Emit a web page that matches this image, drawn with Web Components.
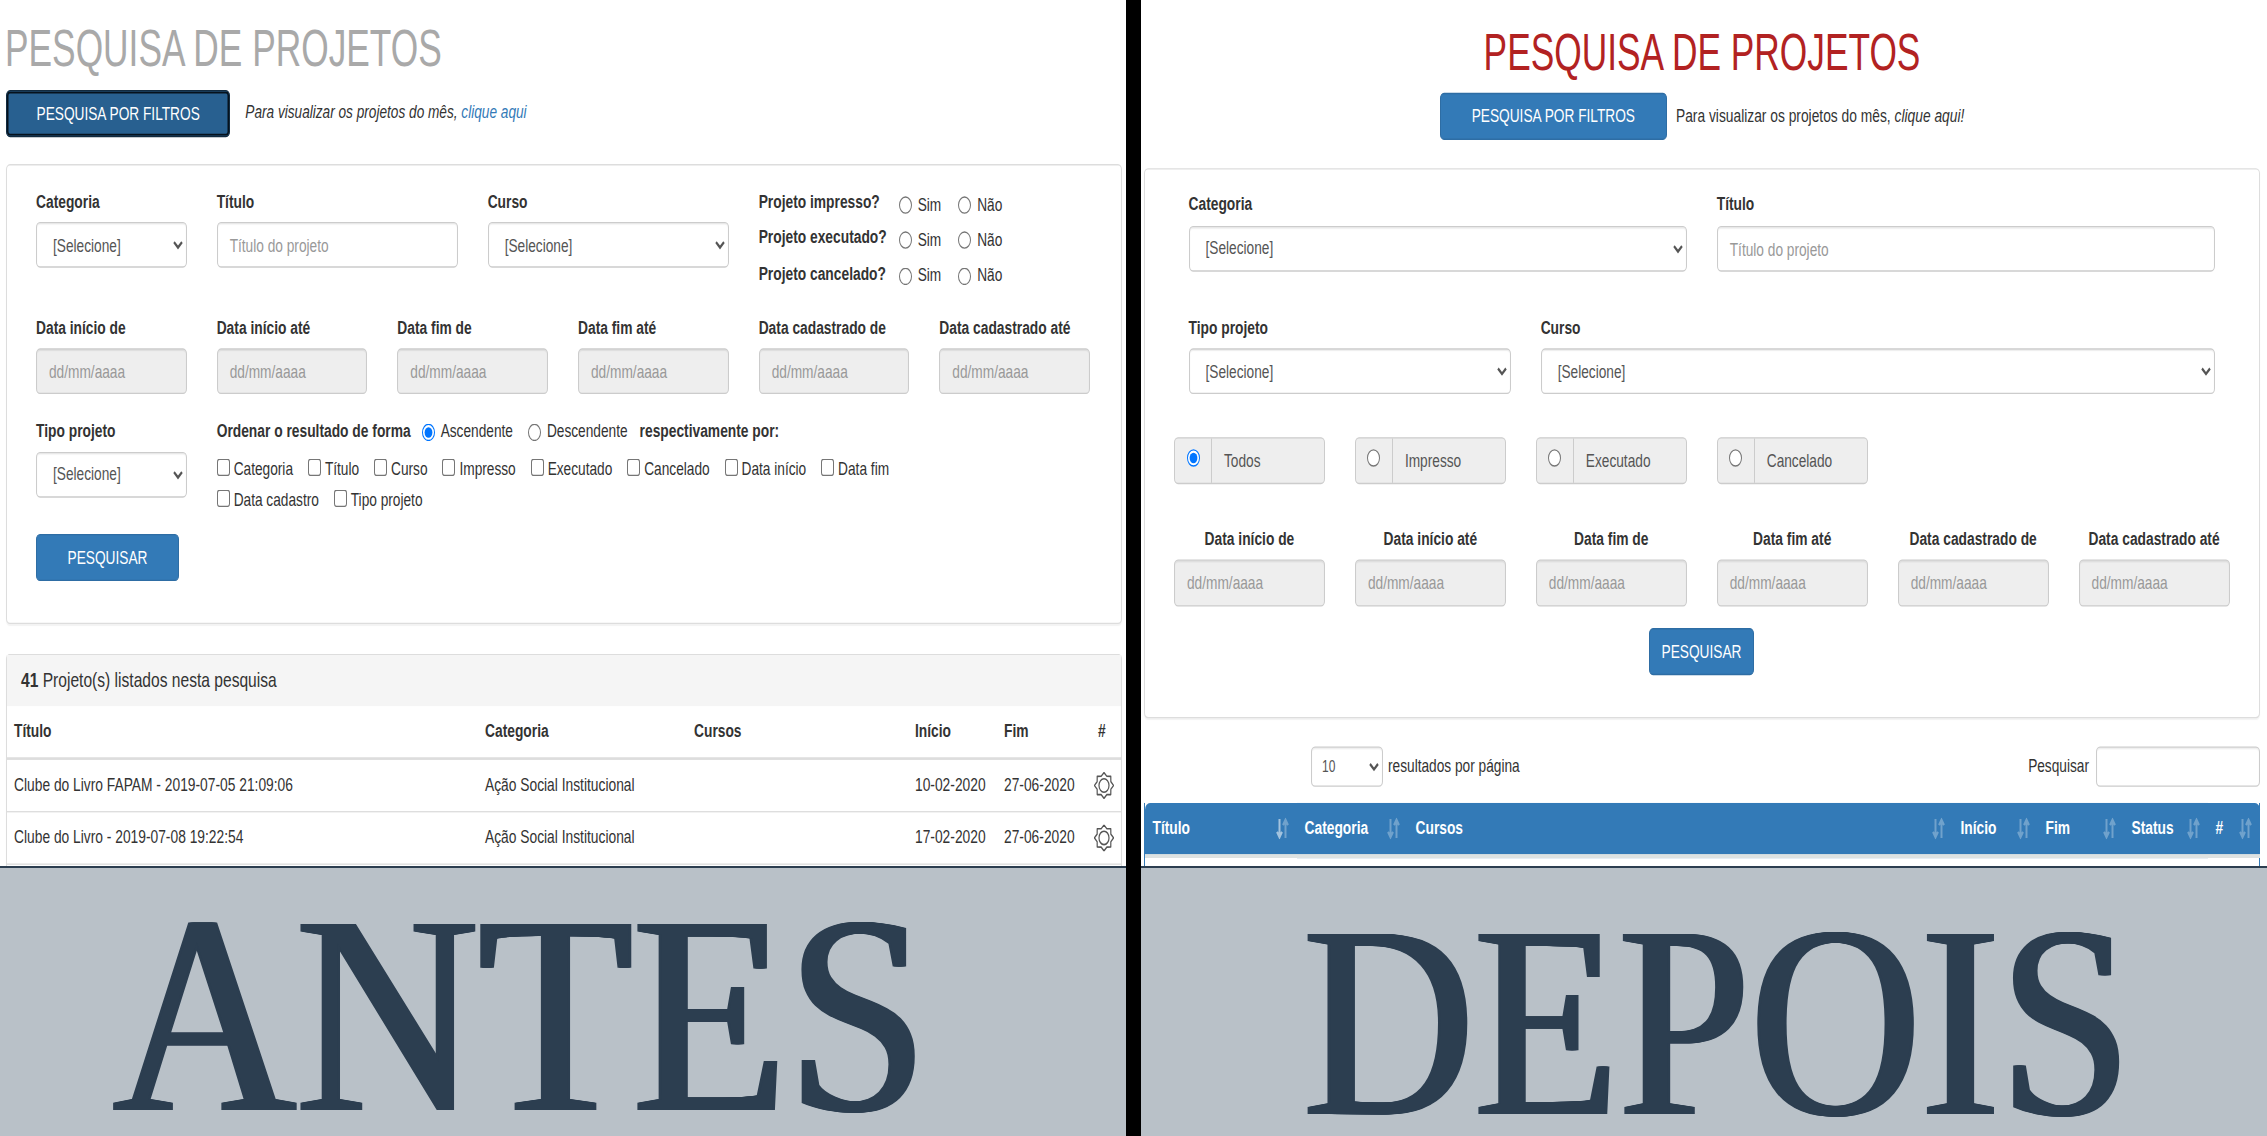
<!DOCTYPE html>
<html lang="pt-BR">
<head>
<meta charset="utf-8">
<title>Pesquisa de projetos - antes e depois</title>
<style>
    html, body { margin: 0; height: 100%; overflow: hidden; background: #000; }
    body { display: flex; gap: 15px; font-family: "Liberation Sans", Arial, sans-serif; }
</style>
</head>
<body>
<compare-pane label="ANTES" style="--label-size:284px;--label-sx:.89;--label-top:34px;--label-shift:-42px">
    <before-view></before-view>
</compare-pane>
<compare-pane label="DEPOIS" style="--label-size:275px;--label-sx:.86;--label-top:41px;--label-shift:13px">
    <after-view></after-view>
</compare-pane>

<script>
(()=>{
    const FONT = '"Liberation Sans", Arial, sans-serif';

    // styles every view needs again, since nothing crosses a shadow root
    const base = `
    * { box-sizing: border-box; }
    h1 { margin: 0; font-size: 35.3px; line-height: 38.5px; font-weight: 400; transform: scaleY(1.08); transform-origin: 0 32px; }
    b, .lb { font-weight: 700; }
    a { color: #337ab7; text-decoration: none; }
    .c2 { grid-column: span 2; padding: 0 15px; }
    .c3 { grid-column: span 3; padding: 0 15px; }
    .c4 { grid-column: span 4; padding: 0 15px; }
    .c6 { grid-column: span 6; padding: 0 15px; }
    .c8 { grid-column: span 8; padding: 0 15px; }
    .c10 { grid-column: span 10; padding: 0 15px; }
    .card { border: 1px solid #ddd; border-radius: 4px; background: #fff; box-shadow: 0 1px 1px rgba(0,0,0,.05); }
    input[type=radio], input[type=checkbox] { margin: 0; width: 13px; height: 13px; flex: none; }
    `;

    class ComparePane extends HTMLElement {
        connectedCallback() {
            const shadow = this.attachShadow({ mode: 'open' });
            shadow.innerHTML = `
<style>
    :host { display: flex; flex-direction: column; width: 1126px; flex: none; height: 100%; }
    .shot { height: 866px; background: #fff; overflow: hidden; }
    .stretch { height: 644px; transform: scaleY(1.345); transform-origin: 0 0; }
    .label {
        flex: 1; min-height: 0; overflow: hidden;
        display: flex; justify-content: center; align-items: flex-start;
        padding-top: var(--label-top);
        background: #b9c1c8;
        border-top: 2px solid #2c3e50;
    }
    span {
        font: 400 var(--label-size)/225px "Liberation Serif", "Times New Roman", serif;
        color: #2c3e50;
        /* stems heavier, hairlines stay thin */
        text-shadow: 3px 0 0 #2c3e50, -3px 0 0 #2c3e50, 1.5px 0 0 #2c3e50, -1.5px 0 0 #2c3e50;
        transform: translateX(var(--label-shift)) scaleX(var(--label-sx));
    }
</style>
<div class="shot"><div class="stretch"><slot></slot></div></div>
<div class="label"><span>${this.getAttribute('label')}</span></div>`;
        }
    }

    class UiSelect extends HTMLElement {
        connectedCallback() {
            const shadow = this.attachShadow({ mode: 'open' });
            const text = this.getAttribute('text') || '[Selecione]';
            shadow.innerHTML = `
<style>
    :host { display: block; }
    select {
        display: block; width: 100%; height: var(--h, 34px);
        padding: var(--pad, 6px 12px);
        font: var(--fs, 13.7px)/1.43 ${FONT};
        color: #555; background-color: #fff;
        border: 1px solid #ccc; border-radius: 4px;
        box-shadow: inset 0 1px 1px rgba(0,0,0,.075);
    }
</style>
<select><option>${text}</option></select>`;
        }
    }

    // looks like a bootstrap form-control; the placeholder stays plain text
    class UiInput extends HTMLElement {
        connectedCallback() {
            const shadow = this.attachShadow({ mode: 'open' });
            shadow.innerHTML = `
<style>
    :host {
        display: block; box-sizing: border-box; height: var(--h, 34px); padding: 7px 12px 5px;
        font: 13.7px/20px ${FONT}; color: #999; background: #fff;
        border: 1px solid #ccc; border-radius: 4px;
        box-shadow: inset 0 1px 1px rgba(0,0,0,.075);
    }
    :host([disabled]) { background: #eee; }
</style>
<slot></slot>`;
        }
    }

    class UiButton extends HTMLElement {
        connectedCallback() {
            const shadow = this.attachShadow({ mode: 'open' });
            shadow.innerHTML = `
<style>
    :host {
        display: inline-block; box-sizing: border-box; height: 35px; padding: 7px 30px;
        font: 13.7px/20px ${FONT}; color: #fff; white-space: nowrap;
        background: #337ab7; border: 1px solid #2e6da4; border-radius: 4px;
    }
    :host([focused]) {
        background: #286090; border-color: #122b40;
        box-shadow: inset 0 0 0 1.5px #06121d;
    }
</style>
<slot></slot>`;
        }
    }

    class FormField extends HTMLElement {
        connectedCallback() {
            const shadow = this.attachShadow({ mode: 'open' });
            shadow.innerHTML = `
<style>
    :host { display: block; }
    label { display: block; font: 700 13.8px/20px ${FONT}; color: #333; margin-bottom: var(--gap, 5.5px); white-space: nowrap; }
    :host([center]) label { text-align: center; }
</style>
<label>${this.getAttribute('label')}</label>
<slot></slot>`;
        }
    }

    class SortIcon extends HTMLElement {
        connectedCallback() {
            const shadow = this.attachShadow({ mode: 'open' });
            const down = this.hasAttribute('active') ? .55 : .3;
            shadow.innerHTML = `
<style>:host { display: block; width: 13px; height: 16px; flex: none; } svg { display: block; }</style>
<svg width="13" height="16" viewBox="0 0 13 16" fill="none" stroke="#fff" stroke-width="2">
    <path d="M3.5 1V14M1 10.5L3.5 14.5 6 10.5" opacity="${down}"/>
    <path d="M9.5 15V2M7 5.5L9.5 1.5 12 5.5" opacity=".3"/>
</svg>`;
        }
    }

    class GearIcon extends HTMLElement {
        connectedCallback() {
            const shadow = this.attachShadow({ mode: 'open' });
            const pts = [];
            for (let i = 0; i < 16; i++) {
                const r = i % 2 ? 7.4 : 9.6;
                const a = i * Math.PI / 8 - Math.PI / 2;
                pts.push((10 + r * Math.cos(a)).toFixed(2) + ',' + (10 + r * Math.sin(a)).toFixed(2));
            }
            shadow.innerHTML = `
<style>:host { display: block; width: 20px; height: 20px; } svg { display: block; }</style>
<svg width="20" height="20" viewBox="0 0 20 20" fill="none" stroke="#555" stroke-width="1.2">
    <polygon points="${pts.join(' ')}" stroke-linejoin="round"/>
    <circle cx="10" cy="10" r="5"/>
</svg>`;
        }
    }

    class BeforeView extends HTMLElement {
        connectedCallback() {
            const shadow = this.attachShadow({ mode: 'open' });
            const dates = ['Data início de', 'Data início até', 'Data fim de', 'Data fim até', 'Data cadastrado de', 'Data cadastrado até'];
            const checks = ['Categoria', 'Título', 'Curso', 'Impresso', 'Executado', 'Cancelado', 'Data início', 'Data fim', 'Data cadastro', 'Tipo projeto'];
            const flags = ['Projeto impresso?', 'Projeto executado?', 'Projeto cancelado?'];
            const rows = [
                ['Clube do Livro FAPAM - 2019-07-05 21:09:06', '10-02-2020'],
                ['Clube do Livro - 2019-07-08 19:22:54', '17-02-2020'],
            ];
            shadow.innerHTML = `
<style>
    ${base}
    :host { display: block; font: 13.7px/20px ${FONT}; color: #333; }
    h1 { color: #a9a9a9; padding: 17px 0 0 5px; }
    .row { display: grid; grid-template-columns: repeat(12, 1fr); }
    .bar { display: flex; align-items: center; gap: 15px; margin: 11px 0 0 6px; }
    .bar ui-button { padding-left: 29.5px; padding-right: 29.5px; }
    .note { font-size: 13.65px; font-style: italic; }
    .card.filters { width: 1116px; margin: 20px 0 0 6px; padding: 18px 16px 31px 14px; }
    .r1 { --gap: 4.5px; }
    .flags { padding-top: .5px; }
    .flag { display: flex; height: 26.4px; white-space: nowrap; font-size: 13.8px; }
    .flag b { width: 140px; }
    .opts { display: flex; align-items: center; height: 20px; margin-top: 1.5px; font-size: 13.7px; }
    .opts input { margin-right: 6px; }
    .opts span { margin-right: 17px; }
    .r2 { margin-top: 13.5px; }
    .r3 { margin-top: 18px; --gap: 4.7px; }
    .order { display: flex; align-items: center; height: 20px; white-space: nowrap; }
    .order b { font-size: 13.8px; }
    .order input { margin: 0 6px 0 11px; }
    .order b:last-child { margin-left: 12px; }
    .order span + input { margin-left: 15px; }
    .checks { display: flex; flex-wrap: wrap; width: 700px; margin-top: 6.6px; }
    .checks label { display: flex; align-items: center; height: 23px; margin-right: 14.9px; white-space: nowrap; }
    .checks input { margin: 0 4px 3px 0; }
    .go { margin-top: 12.9px; padding-left: 15px; }
    .go ui-button { padding-left: 30px; padding-right: 30px; width: 143px; text-align: center; }
    .results { width: 1116px; margin: 22px 0 0 6px; height: 170px; border-bottom: 0; border-radius: 4px 4px 0 0; }
    .head { height: 38.5px; padding: 9px 14px; background: #f5f5f5; font-size: 15.6px; }
    table { width: 100%; table-layout: fixed; border-collapse: collapse; }
    th { height: 39px; padding: 8px 7px; text-align: left; border-bottom: 2px solid #ddd; font-size: 13.8px; }
    td { padding: 8.9px 7px; border-bottom: 1px solid #ddd; white-space: nowrap; font-size: 13.8px; }
    td.g { padding: 0 0 0 3px; }
</style>
<h1>PESQUISA DE PROJETOS</h1>
<div class="bar">
    <ui-button focused>PESQUISA POR FILTROS</ui-button>
    <span class="note">Para visualizar os projetos do mês, <a>clique aqui</a></span>
</div>
<div class="card filters">
    <div class="row r1">
        <form-field class="c2" label="Categoria"><ui-select></ui-select></form-field>
        <form-field class="c3" label="Título"><ui-input>Título do projeto</ui-input></form-field>
        <form-field class="c3" label="Curso"><ui-select></ui-select></form-field>
        <div class="c4 flags">
            ${flags.map(f => `<div class="flag"><b>${f}</b><div class="opts"><input type="radio"><span>Sim</span><input type="radio"><span>Não</span></div></div>`).join('')}
        </div>
    </div>
    <div class="row r2">
        ${dates.map(d => `<form-field class="c2" label="${d}"><ui-input disabled>dd/mm/aaaa</ui-input></form-field>`).join('')}
    </div>
    <div class="row r3">
        <form-field class="c2" label="Tipo projeto"><ui-select></ui-select></form-field>
        <div class="c10">
            <div class="order">
                <b>Ordenar o resultado de forma</b>
                <input type="radio" checked><span>Ascendente</span>
                <input type="radio"><span>Descendente</span>
                <b>respectivamente por:</b>
            </div>
            <div class="checks">
                ${checks.map(c => `<label><input type="checkbox">${c}</label>`).join('')}
            </div>
        </div>
    </div>
    <div class="go"><ui-button>PESQUISAR</ui-button></div>
</div>
<div class="card results">
    <div class="head"><b>41</b> Projeto(s) listados nesta pesquisa</div>
    <table>
        <colgroup><col style="width:471px"><col style="width:209px"><col style="width:221px"><col style="width:89px"><col style="width:94px"><col></colgroup>
        <tr><th>Título</th><th>Categoria</th><th>Cursos</th><th>Início</th><th>Fim</th><th>#</th></tr>
        ${rows.map(r => `<tr><td>${r[0]}</td><td>Ação Social Institucional</td><td></td><td>${r[1]}</td><td>27-06-2020</td><td class="g"><gear-icon></gear-icon></td></tr>`).join('')}
    </table>
</div>`;
        }
    }

    class AfterView extends HTMLElement {
        connectedCallback() {
            const shadow = this.attachShadow({ mode: 'open' });
            const dates = ['Data início de', 'Data início até', 'Data fim de', 'Data fim até', 'Data cadastrado de', 'Data cadastrado até'];
            const status = ['Todos', 'Impresso', 'Executado', 'Cancelado'];
            const cols = [['Título', 152, 1], ['Categoria', 111], ['Cursos', 545], ['Início', 85], ['Fim', 86], ['Status', 84], ['#', 52]];
            shadow.innerHTML = `
<style>
    ${base}
    :host { display: block; width: 1122px; font: 13.7px/20px ${FONT}; color: #333; --gap: 5.5px; }
    h1 { color: #b22222; text-align: center; padding-top: 20px; transform-origin: 0 35px; }
    .bar { display: flex; justify-content: center; align-items: center; gap: 9px; margin-top: 10.5px; }
    .bar ui-button { padding-left: 31px; padding-right: 31px; }
    .note { font-size: 13.8px; }
    .card.filters { width: 1116px; margin: 21px 0 0 2.5px; padding: 16px 0 31px; }
    .a, .b { display: grid; grid-template-columns: repeat(12, 1fr); }
    .a { margin: 0 28.5px 32px 29px; }
    .a + .a { margin-bottom: 32.2px; }
    .b { margin: 0 14px 0 14.5px; }
    .b ui-input { --h: 34.5px; }
    .grp { display: flex; height: 34.5px; background: #eee; border: 1px solid #ccc; border-radius: 4px; }
    .grp div { width: 37px; display: flex; align-items: center; justify-content: center; border-right: 1px solid #ccc; flex: none; }
    .grp input { margin-bottom: 3px; }
    .grp span { padding: 7px 12px 0; color: #555; }
    .st { margin-bottom: 31.5px; }
    .dates { --gap: 5px; }
    .go { text-align: center; margin-top: 16.5px; }
    .go ui-button { padding-left: 12px; padding-right: 12px; }
    .tools { display: flex; align-items: center; height: 30px; margin: 20.5px 0 0 170px; padding-right: 3px; }
    .tools ui-select { width: 72px; --h: 30px; --fs: 12px; --pad: 5px 6px; }
    .tools span { margin-left: 5px; }
    .tools .q { margin-left: auto; margin-right: 7px; }
    .tools ui-input { width: 164px; --h: 30px; }
    .tbl { width: 1116px; margin: 12px 0 0 2.5px; height: 60px; border: solid #337ab7; border-width: 0 1px; }
    table { width: 100%; table-layout: fixed; border-collapse: separate; border-spacing: 0; }
    thead { color: #fff; }
    th { height: 38px; padding: 0 8px; background: #337ab7; text-align: left; border-bottom: 3px solid #dde2e2; box-sizing: content-box; font-size: 13.8px; }
    th:first-child { border-top-left-radius: 5px; }
    th:last-child { border-top-right-radius: 5px; }
    th div { display: flex; justify-content: space-between; align-items: center; padding-top: 1px; }
</style>
<h1>PESQUISA DE PROJETOS</h1>
<div class="bar">
    <ui-button>PESQUISA POR FILTROS</ui-button>
    <span class="note">Para visualizar os projetos do mês, <i>clique aqui!</i></span>
</div>
<div class="card filters">
    <div class="a">
        <form-field class="c6" label="Categoria"><ui-select></ui-select></form-field>
        <form-field class="c6" label="Título"><ui-input>Título do projeto</ui-input></form-field>
    </div>
    <div class="a">
        <form-field class="c4" label="Tipo projeto"><ui-select></ui-select></form-field>
        <form-field class="c8" label="Curso"><ui-select></ui-select></form-field>
    </div>
    <div class="b st">
        ${status.map((s, i) => `<div class="c2"><div class="grp"><div><input type="radio" ${i ? '' : 'checked'}></div><span>${s}</span></div></div>`).join('')}
    </div>
    <div class="b dates">
        ${dates.map(d => `<form-field class="c2" center label="${d}"><ui-input disabled>dd/mm/aaaa</ui-input></form-field>`).join('')}
    </div>
    <div class="go"><ui-button>PESQUISAR</ui-button></div>
</div>
<div class="tools">
    <ui-select text="10"></ui-select><span>resultados por página</span>
    <span class="q">Pesquisar</span><ui-input></ui-input>
</div>
<div class="tbl">
    <table>
        <colgroup>${cols.map(c => `<col style="width:${c[1]}px">`).join('')}</colgroup>
        <thead><tr>${cols.map(c => `<th><div>${c[0]}<sort-icon ${c[2] ? 'active' : ''}></sort-icon></div></th>`).join('')}</tr></thead>
    </table>
</div>`;
        }
    }

    customElements.define('compare-pane', ComparePane);
    customElements.define('ui-select', UiSelect);
    customElements.define('ui-input', UiInput);
    customElements.define('ui-button', UiButton);
    customElements.define('form-field', FormField);
    customElements.define('sort-icon', SortIcon);
    customElements.define('gear-icon', GearIcon);
    customElements.define('before-view', BeforeView);
    customElements.define('after-view', AfterView);
})();
</script>
</body>
</html>
